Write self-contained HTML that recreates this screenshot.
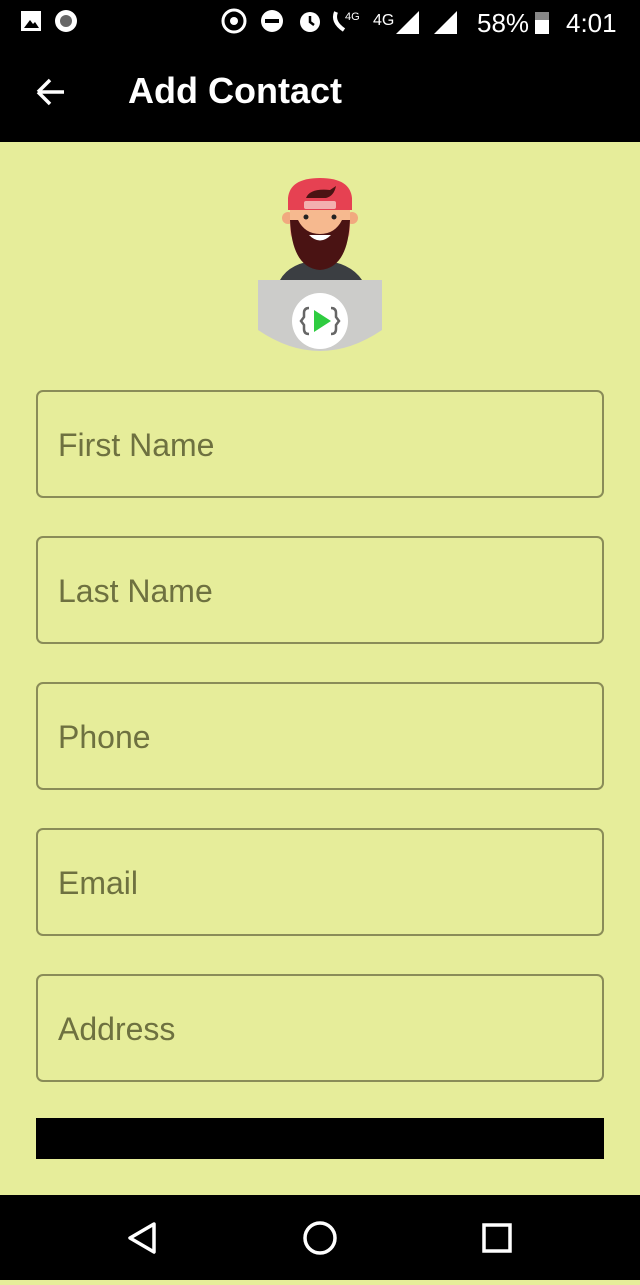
<!DOCTYPE html>
<html><head><meta charset="utf-8"><style>
*{margin:0;padding:0;box-sizing:border-box}
body{width:640px;height:1280px;background:#e6ed9a;font-family:"Liberation Sans",sans-serif;position:relative;overflow:hidden}
.top{position:absolute;left:0;top:0;width:640px;height:142px;background:#000;color:#fff}
.field{position:absolute;left:36px;width:568px;height:108px;border:2px solid #8a8c58;border-radius:7px;}
.field span{position:absolute;left:20px;top:35px;font-size:32px;color:#6e7140}
.nav{position:absolute;left:0;top:1195px;width:640px;height:85px;background:#000}
</style></head><body>
<div class="top">
  <svg width="640" height="142" style="position:absolute;left:0;top:0">
    <rect x="21" y="11" width="20" height="20" fill="#fff"/><path d="M24 28 L30 20 L33 24 L35 22 L39 28Z" fill="#000"/>
    <circle cx="66" cy="21" r="11" fill="#fff"/><circle cx="66" cy="21" r="6" fill="#666"/>
    <circle cx="234" cy="21" r="11" fill="none" stroke="#fff" stroke-width="3"/><circle cx="234" cy="21" r="4" fill="#fff"/>
    <circle cx="272" cy="21" r="11" fill="#fff"/><rect x="265" y="19" width="14" height="4" fill="#000"/>
    <circle cx="310" cy="22" r="10" fill="#fff"/><path d="M310 16 V22 L314 25" stroke="#000" stroke-width="2.5" fill="none"/>
    <path d="M336 12 q-4 10 8 18" stroke="#fff" stroke-width="4" fill="none"/>
    <text x="345" y="20" font-size="11" fill="#fff" font-family="Liberation Sans">4G</text>
    <text x="373" y="25" font-size="16" fill="#fff" font-family="Liberation Sans">4G</text>
    <path d="M396 34 L419 11 V34Z" fill="#fff"/>
    <path d="M434 34 L457 11 V34Z" fill="#fff"/>
    <text x="477" y="32" font-size="26" fill="#fff" font-family="Liberation Sans">58%</text>
    <rect x="535" y="12" width="14" height="22" fill="#fff"/><rect x="535" y="12" width="14" height="8" fill="#888"/>
    <text x="566" y="32" font-size="26" fill="#fff" font-family="Liberation Sans">4:01</text>
    <path d="M38 92 H64 M38 92 L50 80 M38 92 L50 104" stroke="#fff" stroke-width="3.5" fill="none"/>
  </svg>
  <div style="position:absolute;left:128px;top:70px;font-size:36px;font-weight:bold;color:#fff">Add Contact</div>
</div>
<svg width="640" height="240" style="position:absolute;left:0;top:150px">
  <path d="M258 130 H382 V180 Q320 222 258 180Z" fill="#ccccca"/>
  <path d="M280 130 Q290 112 320 110 Q350 112 362 130Z" fill="#3b3e42"/>
  <circle cx="288" cy="68" r="6" fill="#f1a97f"/><circle cx="352" cy="68" r="6" fill="#f1a97f"/>
  <rect x="290" y="45" width="60" height="45" rx="8" fill="#f6b98f"/>
  <path d="M290 70 Q292 118 320 120 Q348 118 350 70 L342 70 Q335 84 320 84 Q305 84 298 70Z" fill="#4a1313"/>
  <path d="M309 85 Q320 96 331 85Z" fill="#fff"/>
  <circle cx="306" cy="67" r="2.5" fill="#222"/><circle cx="334" cy="67" r="2.5" fill="#222"/>
  <path d="M288 60 V48 Q290 28 320 28 Q350 28 352 48 V60Z" fill="#e64152"/>
  <rect x="304" y="51" width="32" height="8" rx="2" fill="#f3b0b0"/>
  <path d="M306 48 Q310 38 330 40 L336 36 Q334 46 326 48Z" fill="#4a1313"/>
  <circle cx="320" cy="171" r="28" fill="#fff"/>
  <path d="M309 158 q-5 0 -5 5 v4 l-3 4 l3 4 v4 q0 5 5 5 M331 158 q5 0 5 5 v4 l3 4 l-3 4 v4 q0 5 -5 5" stroke="#666" stroke-width="2.5" fill="none"/>
  <path d="M314 160 L331 171 L314 182Z" fill="#2ecc40"/>
</svg>
<div class="field" style="top:390px"><span>First Name</span></div>
<div class="field" style="top:536px"><span>Last Name</span></div>
<div class="field" style="top:682px"><span>Phone</span></div>
<div class="field" style="top:828px"><span>Email</span></div>
<div class="field" style="top:974px"><span>Address</span></div>
<div style="position:absolute;left:36px;top:1118px;width:568px;height:41px;background:#000"></div>
<div class="nav">
  <svg width="640" height="85">
    <path d="M154 29 L130 43 L154 57Z" stroke="#fff" stroke-width="3.5" fill="none" stroke-linejoin="round"/>
    <circle cx="320" cy="43" r="15" stroke="#fff" stroke-width="3.5" fill="none"/>
    <rect x="484" y="30" width="26" height="26" stroke="#fff" stroke-width="3.5" fill="none"/>
  </svg>
</div>
</body></html>
